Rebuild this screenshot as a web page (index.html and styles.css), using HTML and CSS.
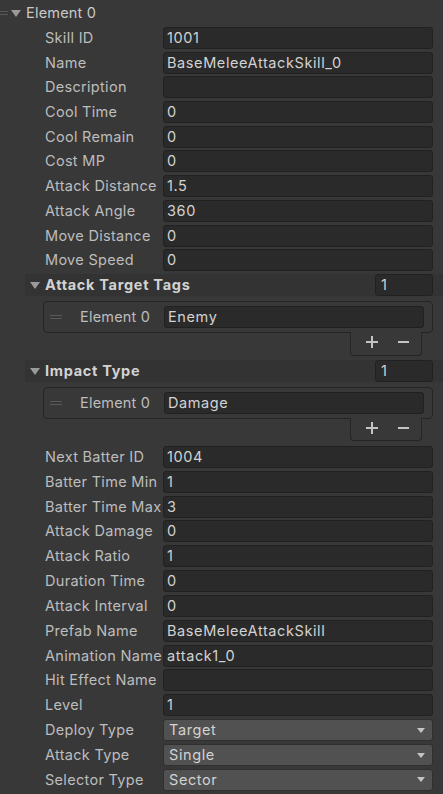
FILE: index.html
```html
<!DOCTYPE html>
<html>
<head>
<meta charset="utf-8">
<link rel="stylesheet" href="styles.css">
</head>
<body>
<div class="inspector">
  <div class="el-head">
    <span class="grip top-grip"></span>
    <span class="tri"></span>
    <span class="el-title">Element 0</span>
  </div>

  <div class="props p1">
    <div class="row"><span class="lbl">Skill ID</span><div class="field">1001</div></div>
    <div class="row"><span class="lbl">Name</span><div class="field">BaseMeleeAttackSkill_0</div></div>
    <div class="row"><span class="lbl">Description</span><div class="field"></div></div>
    <div class="row"><span class="lbl">Cool Time</span><div class="field">0</div></div>
    <div class="row"><span class="lbl">Cool Remain</span><div class="field">0</div></div>
    <div class="row"><span class="lbl">Cost MP</span><div class="field">0</div></div>
    <div class="row"><span class="lbl">Attack Distance</span><div class="field">1.5</div></div>
    <div class="row"><span class="lbl">Attack Angle</span><div class="field">360</div></div>
    <div class="row"><span class="lbl">Move Distance</span><div class="field">0</div></div>
    <div class="row"><span class="lbl">Move Speed</span><div class="field">0</div></div>
  </div>

  <div class="list">
    <div class="bar"><span class="tri"></span><span class="bar-title">Attack Target Tags</span><div class="field count">1</div></div>
    <div class="box"><span class="grip"></span><span class="el-lbl">Element 0</span><div class="field">Enemy</div></div>
    <div class="foot">
      <svg class="ico" width="14" height="14" viewBox="0 0 14 14"><path d="M7 1v12M1 7h12" stroke="#c4c4c4" stroke-width="2"/></svg>
      <svg class="ico" width="14" height="14" viewBox="0 0 14 14"><path d="M2 7h11" stroke="#c4c4c4" stroke-width="2"/></svg>
    </div>
  </div>

  <div class="list list2">
    <div class="bar"><span class="tri"></span><span class="bar-title">Impact Type</span><div class="field count">1</div></div>
    <div class="box"><span class="grip"></span><span class="el-lbl">Element 0</span><div class="field">Damage</div></div>
    <div class="foot">
      <svg class="ico" width="14" height="14" viewBox="0 0 14 14"><path d="M7 1v12M1 7h12" stroke="#c4c4c4" stroke-width="2"/></svg>
      <svg class="ico" width="14" height="14" viewBox="0 0 14 14"><path d="M2 7h11" stroke="#c4c4c4" stroke-width="2"/></svg>
    </div>
  </div>

  <div class="props p2">
    <div class="row"><span class="lbl">Next Batter ID</span><div class="field">1004</div></div>
    <div class="row"><span class="lbl">Batter Time Min</span><div class="field">1</div></div>
    <div class="row"><span class="lbl">Batter Time Max</span><div class="field">3</div></div>
    <div class="row"><span class="lbl">Attack Damage</span><div class="field">0</div></div>
    <div class="row"><span class="lbl">Attack Ratio</span><div class="field">1</div></div>
    <div class="row"><span class="lbl">Duration Time</span><div class="field">0</div></div>
    <div class="row"><span class="lbl">Attack Interval</span><div class="field">0</div></div>
    <div class="row"><span class="lbl">Prefab Name</span><div class="field">BaseMeleeAttackSkill</div></div>
    <div class="row"><span class="lbl">Animation Name</span><div class="field">attack1_0</div></div>
    <div class="row"><span class="lbl">Hit Effect Name</span><div class="field"></div></div>
    <div class="row"><span class="lbl">Level</span><div class="field">1</div></div>
    <div class="row"><span class="lbl">Deploy Type</span><div class="field drop">Target<span class="arrow"></span></div></div>
    <div class="row"><span class="lbl">Attack Type</span><div class="field drop">Single<span class="arrow"></span></div></div>
    <div class="row"><span class="lbl">Selector Type</span><div class="field drop">Sector<span class="arrow"></span></div></div>
  </div>
</div>
</body>
</html>
```

FILE: styles.css
```css
html, body {
  margin: 0;
  padding: 0;
  background: #383838;
}
body {
  width: 443px;
  height: 794px;
  overflow: hidden;
  font-family: Inter, "Noto Sans", sans-serif;
  font-size: 14.5px;
  letter-spacing: 0.3px;
  color: #c4c4c4;
}
.inspector {
  display: flex;
  flex-direction: column;
}
.el-head {
  height: 27px;
  display: flex;
  align-items: center;
  padding-bottom: 2px;
  box-sizing: border-box;
}
.grip {
  display: inline-block;
  width: 12px;
  height: 4px;
  border-top: 1px solid #575757;
  border-bottom: 1px solid #575757;
  box-sizing: border-box;
  flex: none;
}
.top-grip {
  width: 8px;
}
.tri {
  display: inline-block;
  width: 0;
  height: 0;
  border-left: 5px solid transparent;
  border-right: 5px solid transparent;
  border-top: 7px solid #9a9a9a;
  flex: none;
}
.el-head .tri {
  margin-left: 3px;
  margin-top: 1px;
}
.el-title {
  margin-left: 5px;
  color: #c8c8c8;
  letter-spacing: 0.2px;
}
.props {
  display: flex;
  flex-direction: column;
  padding-right: 10px;
}
.row {
  display: flex;
  align-items: flex-start;
  padding-left: 45px;
  height: 24.7px;
}
.p2 .row {
  height: 24.85px;
}
.lbl {
  width: 118px;
  flex: none;
  height: 22px;
  line-height: 21px;
  white-space: nowrap;
  color: #bdbdbd;
}
.field {
  flex: 1;
  height: 22px;
  line-height: 20px;
  box-sizing: border-box;
  background: #2a2a2a;
  border: 1px solid #212121;
  border-radius: 3px;
  padding-left: 3px;
  color: #d2d2d2;
  white-space: nowrap;
  overflow: hidden;
  letter-spacing: 0.6px;
}
.drop {
  background: #515151;
  border-color: #303030;
  display: flex;
  align-items: center;
  justify-content: space-between;
  padding-left: 5px;
  padding-right: 7px;
}
.arrow {
  width: 0;
  height: 0;
  border-left: 4.5px solid transparent;
  border-right: 4.5px solid transparent;
  border-top: 5px solid #c4c4c4;
}
.list {
  display: flex;
  flex-direction: column;
}
.bar {
  margin-left: 25px;
  height: 22px;
  background: #333333;
  display: flex;
  align-items: center;
  padding-left: 5px;
  padding-right: 10px;
}
.bar .tri {
  margin-top: 1px;
}
.bar-title {
  margin-left: 5px;
  font-weight: 700;
  color: #d2d2d2;
  letter-spacing: 0.7px;
}
.count {
  flex: none;
  width: 58px;
  margin-left: auto;
  padding-left: 5px;
}
.box {
  margin: 5px 10px 0 43px;
  height: 32px;
  box-sizing: border-box;
  border: 1px solid #252525;
  border-radius: 4px;
  display: flex;
  align-items: center;
  padding-left: 6px;
  padding-right: 8px;
}
.el-lbl {
  margin-left: 18px;
  width: 84px;
  flex: none;
  color: #bdbdbd;
  letter-spacing: 0.2px;
}
.foot {
  margin-left: 350px;
  width: 72px;
  height: 24px;
  margin-top: -1px;
  box-sizing: border-box;
  border: 1px solid #252525;
  border-top: none;
  border-radius: 0 0 4px 4px;
  background: #383838;
  display: flex;
  align-items: center;
  padding: 0 0 2px 14px;
  gap: 17px;
}
.ico {
  display: block;
}
.list2 {
  margin-top: 4px;
}
.list2 .box {
  margin-top: 5px;
}
.list2 .foot {
  height: 23px;
}
.p2 {
  margin-top: 5px;
}
```
